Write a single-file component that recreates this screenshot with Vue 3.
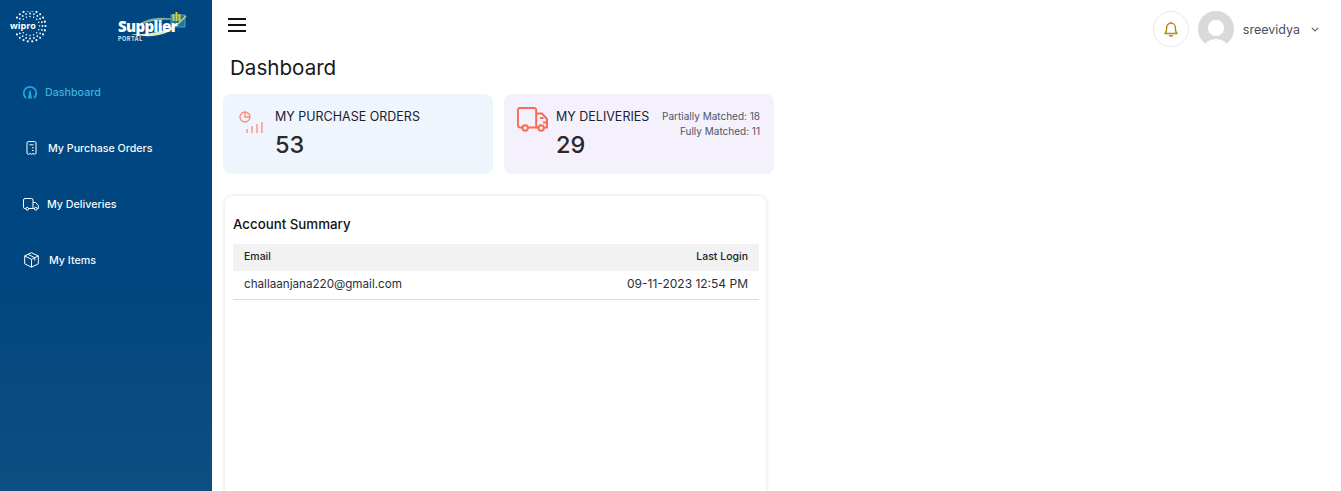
<template>
  <div class="layout">
    <aside class="sidebar">
      <div class="brand">
        <div class="wipro">
          <svg class="wipro-dots" width="38" height="32" viewBox="0 0 38 32">
            <circle
              v-for="(d, i) in wiproDots"
              :key="i"
              :cx="d.x"
              :cy="d.y"
              :r="d.r"
              fill="#fff"
            />
          </svg>
          <span class="wipro-name">wipro</span>
        </div>
        <div class="supplier">
          <svg class="supplier-swoosh" width="72" height="30" viewBox="0 0 72 30">
            <path d="M22 13C32 6 48 5 60 9C48 8 34 9 24 14Z" fill="#7fae9f" />
            <path d="M14 23C32 24 50 20 60 13C54 24 34 28 14 23Z" fill="#dfeccf" />
            <rect x="54" y="4" width="14" height="12" fill="#1a7aa6" stroke="#4fb6d6" stroke-width="0.8" />
            <path d="M56.500 10V3M59.500 10V1M62.500 10V3" stroke="#d8d23a" stroke-width="2" fill="none" />
            <path d="M61 13L69 5" stroke="#e9c95a" stroke-width="1.400" fill="none" />
          </svg>
          <span class="supplier-name">Supplier</span>
          <span class="supplier-sub">PORTAL</span>
        </div>
      </div>
      <nav class="menu">
        <a class="menu-item active">
          <svg width="16" height="16" viewBox="0 0 16 16" fill="none">
            <path d="M3.500 13.500A6.300 6.300 0 1 1 12.500 13.500" stroke="#1ea7de" stroke-width="1.800" stroke-linecap="round" />
            <path d="M7.400 6.500H8.600L10 14.500H6Z" fill="#1ea7de" />
          </svg>
          <span>Dashboard</span>
        </a>
        <a class="menu-item orders">
          <svg width="11" height="14" viewBox="0 0 11 14" fill="none" stroke="#fff" stroke-width="1">
            <path d="M1 12.500V1.800A1.200 1.200 0 0 1 2.200 .6H8.800A1.200 1.200 0 0 1 10 1.800V12.500L8.500 13.300L7 12.500L5.500 13.300L4 12.500L2.500 13.300Z" />
            <path d="M3.500 3.800H7.500M6 6.800H7.500M6 9.500H7.500" />
          </svg>
          <span>My Purchase Orders</span>
        </a>
        <a class="menu-item deliveries">
          <svg width="16" height="13" viewBox="0 0 16 13" fill="none" stroke="#fff" stroke-width="1">
            <path d="M3 10.500H1.800A1.300 1.300 0 0 1 .5 9.200V2A1.500 1.500 0 0 1 2 .5H8.500A1.500 1.500 0 0 1 10 2V10.500H5.500" />
            <path d="M10 4.500H12.500L15.300 7.500V10.500H14M11.500 10.500H10" />
            <circle cx="4.200" cy="10.800" r="1.400" />
            <circle cx="12.800" cy="10.800" r="1.400" />
          </svg>
          <span>My Deliveries</span>
        </a>
        <a class="menu-item items">
          <svg width="15" height="16" viewBox="0 0 15 16" fill="none" stroke="#fff" stroke-width="1" stroke-linejoin="round">
            <path d="M7.500 .7L14.300 3.900V11.800L7.500 15.200L.7 11.800V3.900Z" />
            <path d="M.7 3.900L7.500 7.300L14.300 3.900M7.500 7.300V15.200M4 2.300L10.800 5.700V8.500" />
          </svg>
          <span>My Items</span>
        </a>
      </nav>
    </aside>

    <div class="content">
      <header class="topbar">
        <button class="burger" aria-label="Menu">
          <span></span>
          <span></span>
          <span></span>
        </button>
        <div class="top-right">
          <div class="bell">
            <svg width="14" height="16" viewBox="0 0 14 16" fill="none" stroke="#b08a12" stroke-width="1.400">
              <path d="M1 12.500H13C11.800 11.200 11.400 10.200 11.400 8V6.500A4.400 4.400 0 0 0 2.600 6.500V8C2.600 10.200 2.200 11.200 1 12.500Z" stroke-linejoin="round" />
              <path d="M7 1V2.200" />
              <path d="M5.500 14.800H8.500" stroke-linecap="round" />
            </svg>
          </div>
          <div class="avatar">
            <div class="avatar-head"></div>
            <div class="avatar-body"></div>
          </div>
          <span class="username">sreevidya</span>
          <svg class="chevron" width="8" height="5" viewBox="0 0 8 5" fill="none" stroke="#5b6270" stroke-width="1.100">
            <path d="M.8 .8L4 4L7.200 .8" />
          </svg>
        </div>
      </header>

      <main class="main">
        <h1 class="page-title">Dashboard</h1>
        <div class="stats">
          <section class="stat stat-orders">
            <svg class="stat-icon" width="26" height="24" viewBox="0 0 26 24" fill="none" stroke="#fb8a76" stroke-width="1.300">
              <circle cx="6" cy="6" r="5" />
              <path d="M6 1V6H11" />
              <path d="M8 22V18M13 22V15M18 22V13M23 22V11" />
            </svg>
            <div class="stat-text">
              <div class="stat-label">MY PURCHASE ORDERS</div>
              <div class="stat-value">53</div>
            </div>
          </section>
          <section class="stat stat-deliveries">
            <svg class="stat-icon" width="31" height="25" viewBox="0 0 31 25" fill="none" stroke="#fb6a55" stroke-width="2">
              <path d="M5 20.500H3A2.200 2.200 0 0 1 .9 18.300V3.200A2.200 2.200 0 0 1 3 1H17A2.200 2.200 0 0 1 19.200 3.200V20.500H11.500" />
              <path d="M19.200 6.500H25L30 12V20.500H27.500M21 20.500H19.200" />
              <path d="M23 11H26.500M26 15.500H30" />
              <circle cx="8.200" cy="21" r="2.700" />
              <circle cx="24.200" cy="21" r="2.700" />
            </svg>
            <div class="stat-text">
              <div class="stat-label">MY DELIVERIES</div>
              <div class="stat-value">29</div>
            </div>
            <div class="stat-notes">
              <div>Partially Matched: 18</div>
              <div>Fully Matched: 11</div>
            </div>
          </section>
        </div>

        <section class="summary">
          <h2 class="summary-title">Account Summary</h2>
          <div class="summary-head">
            <span>Email</span>
            <span>Last Login</span>
          </div>
          <div class="summary-row">
            <span class="summary-email">challaanjana220@gmail.com</span>
            <span>09-11-2023 12:54 PM</span>
          </div>
        </section>
      </main>
    </div>
  </div>
</template>

<script setup>
// wipro logo is rings of dots, the outer ones get bigger
const wiproDots = [];
const rings = [
  { radius: 15.5, count: 22, size: 1.05 },
  { radius: 12.5, count: 20, size: 0.9 },
  { radius: 9.5, count: 16, size: 0.75 },
];
rings.forEach((ring) => {
  for (let i = 0; i < ring.count; i++) {
    const angle = (i / ring.count) * Math.PI * 2;
    const x = 21 + Math.cos(angle) * ring.radius;
    const y = 15 + Math.sin(angle) * ring.radius;
    // leave room for the name on the left side
    if (x < 21 && Math.abs(y - 15) < 5) continue;
    wiproDots.push({ x, y, r: ring.size });
  }
});
</script>

<style>
html,
body {
  margin: 0;
  background: #fff;
  overflow: hidden;
}
</style>

<style scoped>
.layout {
  display: flex;
  height: 491px;
  font-family: Inter, "Noto Sans", sans-serif;
  color: #222;
  overflow: hidden;
}

.sidebar {
  width: 212px;
  flex-shrink: 0;
  background: linear-gradient(180deg, #004680 0%, #004680 55%, #0e4f80 100%);
  color: #fff;
}

.brand {
  position: relative;
  height: 64px;
}

.wipro {
  position: absolute;
  left: 9px;
  top: 11px;
  width: 38px;
  height: 32px;
}

.wipro-dots {
  position: absolute;
  left: 0;
  top: 0;
}

.wipro-name {
  position: absolute;
  left: 1px;
  top: 9px;
  font-size: 9px;
  line-height: 12px;
  font-weight: 700;
  font-family: "Open Sans", sans-serif;
}

.supplier {
  position: absolute;
  left: 117px;
  top: 11px;
  width: 72px;
  height: 32px;
}

.supplier-swoosh {
  position: absolute;
  left: 0;
  top: 0;
}

.supplier-name {
  position: absolute;
  left: 1px;
  top: 6px;
  font-size: 15px;
  line-height: 18px;
  font-weight: 800;
  letter-spacing: -0.6px;
  font-family: "Open Sans", sans-serif;
}

.supplier-sub {
  position: absolute;
  left: 1px;
  top: 25px;
  font-size: 5.500px;
  line-height: 7px;
  font-weight: 700;
  letter-spacing: 0.5px;
  color: #d5e3ee;
}

.menu {
  display: flex;
  flex-direction: column;
  gap: 40px;
  padding-top: 20px;
}

.menu-item {
  display: flex;
  align-items: center;
  height: 16px;
  font-size: 10.700px;
  font-weight: 500;
  color: #f6f9fc;
}

.menu-item svg {
  flex-shrink: 0;
}

.menu-item.active {
  padding-left: 22px;
  gap: 7px;
  color: #3fb1de;
}

.menu-item.orders {
  padding-left: 26px;
  gap: 11px;
}

.menu-item.deliveries {
  padding-left: 23px;
  gap: 8px;
}

.menu-item.items {
  padding-left: 24px;
  gap: 10px;
}

.content {
  flex: 1;
  min-width: 0;
}

.topbar {
  display: flex;
  justify-content: space-between;
  align-items: center;
  height: 56px;
  padding: 0 22px 0 16px;
}

.burger {
  display: flex;
  flex-direction: column;
  gap: 4px;
  width: 18px;
  padding: 0;
  margin-bottom: 7px;
  background: none;
  border: 0;
}

.burger span {
  display: block;
  height: 2px;
  background: #111;
}

.top-right {
  display: flex;
  align-items: center;
  margin-top: 2px;
}

.bell {
  display: flex;
  align-items: center;
  justify-content: center;
  width: 36px;
  height: 36px;
  border: 1px solid #e8e8e8;
  border-radius: 50%;
  box-sizing: border-box;
  margin-right: 9px;
}

.avatar {
  position: relative;
  width: 36px;
  height: 36px;
  border-radius: 50%;
  background: #d9d9d9;
  overflow: hidden;
  margin-right: 9px;
}

.avatar-head {
  position: absolute;
  left: 10px;
  top: 9px;
  width: 16px;
  height: 16px;
  border-radius: 50%;
  background: #fff;
}

.avatar-body {
  position: absolute;
  left: 5px;
  top: 28px;
  width: 26px;
  height: 20px;
  border-radius: 50%;
  background: #fff;
}

.username {
  font-size: 12.500px;
  color: #4b5160;
  margin-right: 11px;
}

.main {
  padding: 0 0 0 11px;
}

.page-title {
  margin: 0 0 12px 7px;
  height: 26px;
  font-size: 20.600px;
  line-height: 24px;
  font-weight: 400;
  color: #1a1a1a;
}

.stats {
  display: flex;
  gap: 11px;
}

.stat {
  display: flex;
  width: 270px;
  height: 80px;
  box-sizing: border-box;
  border-radius: 8px;
}

.stat-orders {
  background: #eef5fd;
  padding: 17px 0 0 16px;
}

.stat-deliveries {
  background: #f4f1fc;
  padding: 13px 14px 0 13px;
}

.stat-orders .stat-icon {
  margin-right: 10px;
}

.stat-deliveries .stat-icon {
  margin-right: 8px;
}

.stat-orders .stat-text {
  margin-top: -2px;
}

.stat-deliveries .stat-text {
  margin-top: 2px;
}

.stat-label {
  font-size: 12.500px;
  line-height: 16px;
  color: #1c2230;
}

.stat-value {
  margin-top: 6px;
  font-size: 23.500px;
  line-height: 28px;
  font-weight: 500;
  color: #2a2a2a;
}

.stat-notes {
  margin-left: auto;
  padding-top: 2px;
  text-align: right;
  font-size: 10px;
  line-height: 15px;
  color: #4d5566;
}

.summary {
  width: 541px;
  height: 340px;
  margin: 22px 0 0 2px;
  padding: 19px 7px 0 8px;
  box-sizing: border-box;
  background: #fff;
  border-radius: 8px;
  box-shadow: 0 0 4px rgba(0, 0, 0, 0.14);
}

.summary-title {
  margin: 0 0 11px;
  height: 18px;
  font-size: 13.300px;
  line-height: 18px;
  font-weight: 500;
  color: #111;
}

.summary-head,
.summary-row {
  display: flex;
  justify-content: space-between;
  box-sizing: border-box;
}

.summary-head {
  align-items: center;
  padding: 0 11px 2px;
  height: 27px;
  background: #f2f2f2;
  font-size: 10.500px;
  font-weight: 500;
  color: #222;
}

.summary-row {
  align-items: baseline;
  padding: 5px 11px 0;
  height: 29px;
  line-height: 16px;
  border-bottom: 1px solid #dcdcdc;
  font-size: 12px;
  color: #2b2f3a;
}

.summary-email {
  font-size: 11.650px;
}
</style>
